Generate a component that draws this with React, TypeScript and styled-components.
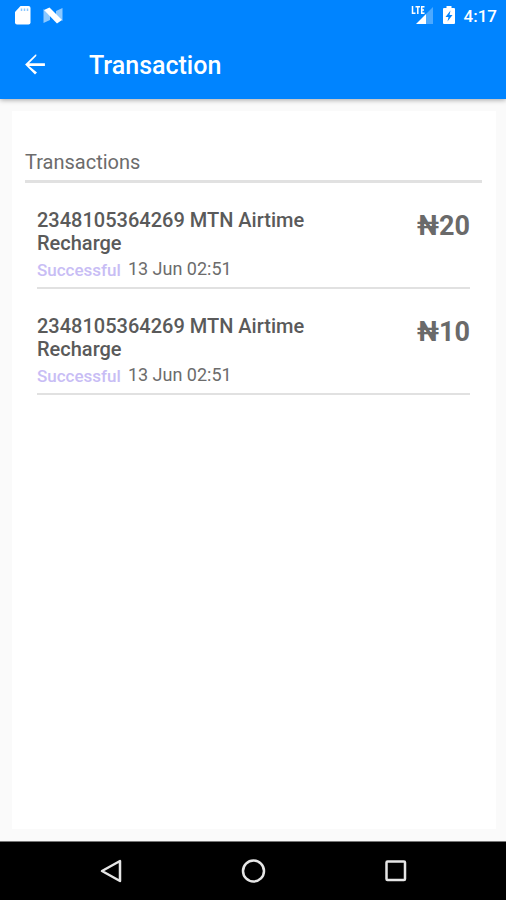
import React from 'react';
import styled, { createGlobalStyle } from 'styled-components';

const GlobalStyle = createGlobalStyle`
  *, *::before, *::after { box-sizing: border-box; }
  body { margin: 0; background: #fafafa; font-family: Roboto, "Liberation Sans", sans-serif; }
  h1, h2, h3, p, ul { margin: 0; padding: 0; }
`;

const Screen = styled.div`
  display: flex;
  flex-direction: column;
  min-height: 100vh;
  background: #fafafa;
`;

const Header = styled.header`
  background: #0084ff;
  color: #fff;
  box-shadow: 0 1px 5px rgba(0, 0, 0, 0.35);
`;

const StatusBar = styled.div`
  display: flex;
  align-items: center;
  justify-content: space-between;
  height: 32px;
  padding: 0 9px 0 13px;
`;

const StatusGroup = styled.div<{ $gap: number }>`
  display: flex;
  align-items: center;
  gap: ${(p) => p.$gap}px;
`;

const Clock = styled.time`
  font-size: 17px;
  font-weight: 500;
  line-height: 24px;
`;

const AppBar = styled.div`
  display: flex;
  align-items: center;
  gap: 37px;
  height: 67px;
  padding: 0 18px;
`;

const IconButton = styled.button`
  display: flex;
  align-items: center;
  justify-content: center;
  padding: 0;
  border: 0;
  background: none;
  color: inherit;
  cursor: pointer;
`;

const Title = styled.h1`
  font-size: 25px;
  font-weight: 500;
  line-height: 32px;
`;

const Content = styled.main`
  display: flex;
  flex: 1;
  flex-direction: column;
  padding: 12px 10px 12px 12px;
`;

const Card = styled.section`
  flex: 1;
  padding: 38px 14px 14px 13px;
  background: #fff;
`;

const SectionTitle = styled.h2`
  padding-bottom: 4px;
  border-bottom: 3px solid #e1e1e1;
  color: #6c6c6c;
  font-size: 20px;
  font-weight: 400;
  line-height: 27px;
`;

const List = styled.ul`
  padding: 0 12px;
  list-style: none;
`;

const Row = styled.li`
  display: flex;
  justify-content: space-between;
  gap: 24px;
  min-height: 106px;
  padding-top: 26px;
  border-bottom: 2px solid #e1e1e1;
`;

const Details = styled.div`
  flex: 0 1 284px;
`;

const Name = styled.h3`
  color: #5a5a5a;
  font-size: 20px;
  font-weight: 500;
  line-height: 23px;
`;

const Meta = styled.p`
  display: flex;
  align-items: flex-start;
  gap: 7px;
  padding-top: 2px;
`;

const Status = styled.span`
  color: #c8bdf5;
  font-size: 17px;
  font-weight: 500;
  line-height: 26px;
`;

const DateText = styled.time`
  color: #6c6c6c;
  font-size: 18px;
  line-height: 23px;
`;

const Amount = styled.strong`
  color: #6a6a6a;
  font-size: 27px;
  font-weight: 700;
  line-height: 34px;
`;

const NavBar = styled.nav`
  display: grid;
  grid-template-columns: repeat(3, 1fr);
  height: 59px;
  padding: 0 8%;
  border-top: 1px solid #777;
  background: #000;
  color: #e6e6e6;
`;

const transactions = [
  { id: 1, name: '2348105364269 MTN Airtime Recharge', status: 'Successful', date: '13 Jun 02:51', amount: '₦20' },
  { id: 2, name: '2348105364269 MTN Airtime Recharge', status: 'Successful', date: '13 Jun 02:51', amount: '₦10' },
];

const SdCardIcon = () => (
  <svg width="20" height="22" viewBox="0 0 20 22" aria-hidden="true">
    <path fill="#fff" d="M7.500 1H15.500Q17.500 1 17.500 3V17.500Q17.500 19.500 15.500 19.500H4Q2 19.500 2 17.500V7Z" />
    <path stroke="#8cc8ff" strokeWidth="1.500" d="M8.500 3.500v2.500M11.500 3.500v2.500M14.500 3.500v2.500" />
  </svg>
);

const NougatIcon = () => (
  <svg width="22" height="20" viewBox="0 0 22 20" aria-hidden="true">
    <path fill="#8cc8ff" d="M1.500 3L8 9V14L1.500 17ZM20.500 2V15L14 10V5Z" />
    <path fill="#fff" d="M2 4L7.500 1.500L20 14L15 17.500Z" />
  </svg>
);

const SignalIcon = () => (
  <svg width="24" height="20" viewBox="0 0 24 20" aria-hidden="true">
    <path fill="#4ca9ff" d="M23 1V18H16V8Z" />
    <path fill="#fff" d="M16 8V18H6Z" />
    <path fill="none" stroke="#fff" strokeWidth="1.500" d="M2.500 0V7.200H5.500M5.500 .8H10M7.800 .8V8M14.500 .8H11.700V7.200H14.500M11.700 4H14" />
  </svg>
);

const BatteryIcon = () => (
  <svg width="14" height="20" viewBox="0 0 14 20" aria-hidden="true">
    <path fill="#fff" d="M4.500 0H9.500V2H12Q13 2 13 3V17Q13 18 12 18H2Q1 18 1 17V3Q1 2 2 2H4.500Z" />
    <path fill="#0084ff" d="M8.500 4.500L3.500 11H6.500L5.500 15.500L10.500 9H7.500Z" />
  </svg>
);

const ArrowIcon = () => (
  <svg width="34" height="34" viewBox="0 0 24 24" aria-hidden="true">
    <path fill="currentColor" d="M19 10H7.830l4.880-4.880c.39-.39.39-1.020 0-1.410L12 4.200l-7 6.800 7 7 1.410-1.410L7.830 12H19z" />
  </svg>
);

const App: React.FC = () => (
  <Screen>
    <GlobalStyle />
    <Header>
      <StatusBar>
        <StatusGroup $gap={9}>
          <SdCardIcon />
          <NougatIcon />
        </StatusGroup>
        <StatusGroup $gap={8}>
          <SignalIcon />
          <BatteryIcon />
          <Clock>4:17</Clock>
        </StatusGroup>
      </StatusBar>
      <AppBar>
        <IconButton type="button" aria-label="Navigate up"><ArrowIcon /></IconButton>
        <Title>Transaction</Title>
      </AppBar>
    </Header>
    <Content>
      <Card>
        <SectionTitle>Transactions</SectionTitle>
        <List>
          {transactions.map((t) => (
            <Row key={t.id}>
              <Details>
                <Name>{t.name}</Name>
                <Meta>
                  <Status>{t.status}</Status>
                  <DateText>{t.date}</DateText>
                </Meta>
              </Details>
              <Amount>{t.amount}</Amount>
            </Row>
          ))}
        </List>
      </Card>
    </Content>
    <NavBar aria-label="System">
      <IconButton type="button" aria-label="Back">
        <svg width="26" height="26" viewBox="0 0 26 26" fill="none" stroke="currentColor" strokeWidth="2.500" strokeLinejoin="round">
          <path d="M22 3V23L4 13Z" />
        </svg>
      </IconButton>
      <IconButton type="button" aria-label="Home">
        <svg width="26" height="26" viewBox="0 0 26 26" fill="none" stroke="currentColor" strokeWidth="2.500">
          <circle cx="13.500" cy="13" r="10.500" />
        </svg>
      </IconButton>
      <IconButton type="button" aria-label="Recent apps">
        <svg width="26" height="26" viewBox="0 0 26 26" fill="none" stroke="currentColor" strokeWidth="2.500">
          <rect x="4.500" y="3.500" width="18.500" height="18.500" rx="1" />
        </svg>
      </IconButton>
    </NavBar>
  </Screen>
);

export default App;
